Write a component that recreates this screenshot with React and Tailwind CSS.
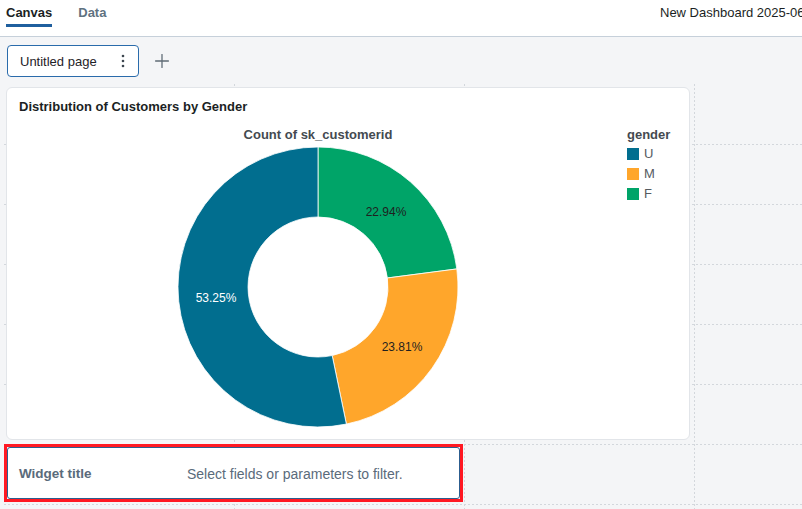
import { Plus } from "lucide-react";

const slices = [
  { name: "F", color: "#00a468", d: "M 0 -140 A 140 140 0 0 1 138.83 -18.07 L 69.41 -9.03 A 70 70 0 0 0 0 -70 Z" },
  { name: "M", color: "#ffa62b", d: "M 138.83 -18.07 A 140 140 0 0 1 28.39 137.09 L 14.2 68.55 A 70 70 0 0 0 69.41 -9.03 Z" },
  { name: "U", color: "#016e8f", d: "M 28.39 137.09 A 140 140 0 1 1 0 -140 L 0 -70 A 70 70 0 1 0 14.2 68.55 Z" },
];

const legend = [
  { name: "U", color: "#016e8f" },
  { name: "M", color: "#ffa62b" },
  { name: "F", color: "#00a468" },
];

const GridLines = () => (
  <svg className="absolute inset-0" width="798" height="425">
    {[230, 460, 690].map((x) => (
      <line key={x} x1={x + 0.5} y1="0" x2={x + 0.5} y2="425" stroke="#d3d7dc" strokeDasharray="2 2" />
    ))}
    {[60, 120, 180, 240, 300, 360, 420].map((y) => (
      <line key={y} x1="0" y1={y + 0.5} x2="798" y2={y + 0.5} stroke="#d3d7dc" strokeDasharray="2 2" />
    ))}
  </svg>
);

const Donut = () => (
  <svg width="284" height="284" viewBox="-142 -142 284 284" className="mx-auto mt-[2px] block">
    {slices.map((s) => (
      <path key={s.name} d={s.d} fill={s.color} stroke="#ffffff" strokeWidth="0.8" />
    ))}
    <text x="68" y="-75" textAnchor="middle" dominantBaseline="central" fontSize="12" fill="#1f1f1f">22.94%</text>
    <text x="84" y="60" textAnchor="middle" dominantBaseline="central" fontSize="12" fill="#1f1f1f">23.81%</text>
    <text x="-102" y="11" textAnchor="middle" dominantBaseline="central" fontSize="12" fill="#ffffff">53.25%</text>
  </svg>
);

const App = () => {
  return (
    <div className="w-[802px] h-[509px] overflow-hidden flex flex-col bg-[#f4f5f7] text-[#1f2328]" style={{ fontFamily: '"Liberation Sans", Arial, sans-serif' }}>
      <div className="h-[37px] bg-white border-b border-[#c6d0da] flex items-start shrink-0">
        <div className="w-[660px] shrink-0 flex pl-[6px] gap-[26px]">
          <div className="pt-[5px] h-[27px] border-b-[3px] border-[#1f5f9e] text-[13px] leading-[16px] font-bold text-[#1b1f24]">Canvas</div>
          <div className="pt-[5px] text-[13px] leading-[16px] font-bold text-[#5f7281]">Data</div>
        </div>
        <div className="pt-[5px] text-[13px] leading-[16px] whitespace-nowrap text-[#1b1f24]">New Dashboard 2025-06-18 10:42:17</div>
      </div>

      <div className="flex items-center pl-[7px] pt-[8px] gap-[12px]">
        <div className="w-[132px] h-[32px] border border-[#2a6bab] rounded-[4px] bg-white flex items-center justify-between pl-[12px] pr-[13px]">
          <span className="text-[13px] leading-[16px] pt-[1px] text-[#1f2328]">Untitled page</span>
          <svg width="4" height="14" viewBox="0 0 4 14">
            <circle cx="2" cy="2" r="1.3" fill="#3d4650" />
            <circle cx="2" cy="7" r="1.3" fill="#3d4650" />
            <circle cx="2" cy="12" r="1.3" fill="#3d4650" />
          </svg>
        </div>
        <Plus size={22} strokeWidth={1.4} color="#5f6b76" />
      </div>

      <div className="relative ml-[4px] mt-[7px] flex-1">
        <GridLines />
        <div className="relative flex flex-col">
          <div className="ml-[2px] mt-[3px] w-[684px] h-[353px] bg-white border border-[#e2e5e9] rounded-[6px] px-[12px] pt-[11px]">
            <div className="text-[13px] leading-[16px] font-bold text-[#1b1f24]">Distribution of Customers by Gender</div>
            <div className="flex mt-[12px]">
              <div className="w-[598px]">
                <div className="text-center text-[13px] leading-[16px] font-bold text-[#444a50]">Count of sk_customerid</div>
                <Donut />
              </div>
              <div className="ml-[10px]">
                <div className="text-[13px] leading-[16px] font-bold text-[#444a50]">gender</div>
                <div className="mt-[1px]">
                  {legend.map((l) => (
                    <div key={l.name} className="h-[20px] flex items-center gap-[5px]">
                      <span className="w-[12px] h-[12px]" style={{ backgroundColor: l.color }} />
                      <span className="text-[13px] text-[#555b61]">{l.name}</span>
                    </div>
                  ))}
                </div>
              </div>
            </div>
          </div>

          <div className="mt-[4px] w-[459px] h-[58px] border-[3px] border-[#ff1822]">
            <div className="h-full bg-white border border-[#2c5d8f] rounded-[3px] flex items-center pl-[11px] pt-[2px] text-[#5a6b7b]">
              <span className="font-bold w-[168px] text-[13.5px]">Widget title</span>
              <span className="text-[14px]">Select fields or parameters to filter.</span>
            </div>
          </div>
        </div>
      </div>
    </div>
  );
};

export default App;
